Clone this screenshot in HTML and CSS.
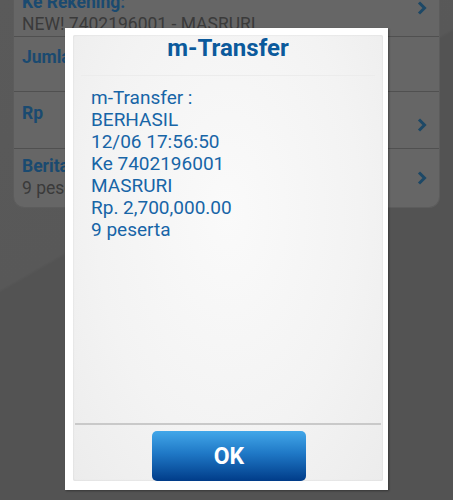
FILE: index.html
```html
<!DOCTYPE html>
<html>
<head>
<meta charset="utf-8">
<link rel="stylesheet" href="styles.css">
</head>
<body>
<div class="screen">
  <div class="list">
    <div class="row row1">
      <div class="row-text">
        <div class="row-title">Ke Rekening:</div>
        <div class="row-sub">NEW! 7402196001 - MASRURI</div>
      </div>
      <svg class="chev" width="10" height="14" viewBox="0 0 10 14"><path d="M2 1.5 L7.5 7 L2 12.5" fill="none" stroke="#1d4866" stroke-width="3"/></svg>
    </div>
    <div class="row row2">
      <div class="row-text">
        <div class="row-title">Jumlah</div>
      </div>
    </div>
    <div class="row row3">
      <div class="row-text">
        <div class="row-title">Rp</div>
      </div>
      <svg class="chev" width="10" height="14" viewBox="0 0 10 14"><path d="M2 1.5 L7.5 7 L2 12.5" fill="none" stroke="#1d4866" stroke-width="3"/></svg>
    </div>
    <div class="row row4">
      <div class="row-text">
        <div class="row-title">Berita</div>
        <div class="row-sub">9 peserta</div>
      </div>
      <svg class="chev" width="10" height="14" viewBox="0 0 10 14"><path d="M2 1.5 L7.5 7 L2 12.5" fill="none" stroke="#1d4866" stroke-width="3"/></svg>
    </div>
  </div>

  <div class="dialog">
    <div class="dialog-inner">
      <div class="dialog-title">m-Transfer</div>
      <div class="dialog-body">
        <div>m-Transfer :</div>
        <div>BERHASIL</div>
        <div>12/06 17:56:50</div>
        <div>Ke 7402196001</div>
        <div>MASRURI</div>
        <div>Rp. 2,700,000.00</div>
        <div>9 peserta</div>
      </div>
      <div class="dialog-footer">
        <button class="ok">OK</button>
      </div>
    </div>
  </div>
</div>
</body>
</html>
```

FILE: styles.css
```css
html, body {
  margin: 0;
  padding: 0;
}
body {
  width: 453px;
  height: 500px;
  overflow: hidden;
  background: linear-gradient(150deg, #5a5a5a 0%, #585858 38%, #535353 38.5%, #535353 100%);
  font-family: Roboto, "Noto Sans", sans-serif;
}
.screen {
  position: relative;
  display: flow-root;
  width: 453px;
  height: 500px;
}
.list {
  margin: -20px 13px 0 13px;
  background: #666666;
  border: 1px solid #5c5c5c;
  border-top: none;
  border-radius: 0 0 11px 11px;
  display: flex;
  flex-direction: column;
}
.row {
  display: flex;
  align-items: center;
  padding: 0 12px 0 8px;
  border-bottom: 1px solid #505050;
  box-sizing: border-box;
}
.row:last-child {
  border-bottom: none;
}
.row1 { height: 57px; }
.row2 { height: 55px; align-items: flex-start; padding-top: 9px; }
.row3 { height: 57px; align-items: flex-start; padding-top: 10px; }
.row4 { height: 58px; }
.row-text {
  flex: 1;
  display: flex;
  flex-direction: column;
}
.row1 .row-text { margin-top: 10px; }
.row4 .row-text { margin-top: -2px; }
.row-title {
  font-weight: bold;
  font-size: 17.5px;
  line-height: 22px;
  color: #1a4a70;
}
.row-sub {
  font-size: 17.5px;
  line-height: 22px;
  color: #3a3a3a;
}
.row3 .chev { margin-top: 16px; }
.chev { flex: none; }

.dialog {
  position: absolute;
  left: 65px;
  top: 28px;
  width: 323px;
  height: 462px;
  box-sizing: border-box;
  background: #ffffff;
  padding: 7px 5px 9px 8px;
  box-shadow: 1px 1px 2px rgba(0,0,0,0.35);
}
.dialog-inner {
  height: 100%;
  display: flex;
  flex-direction: column;
  background: radial-gradient(ellipse at 50% 40%, #fafafa 0%, #f3f3f3 60%, #ececec 100%);
  border-radius: 2px;
  box-shadow: inset 0 0 2px rgba(0,0,0,0.12);
}
.dialog-title {
  text-align: center;
  font-weight: bold;
  font-size: 24px;
  line-height: 26px;
  color: #0b5a9c;
  padding: 0 0 14px;
  margin: 0 8px;
  border-bottom: 1px solid #ececec;
}
.dialog-body {
  flex: 1;
  padding: 11px 0 0 18px;
  font-size: 19px;
  line-height: 22px;
  color: #1765a7;
}
.dialog-footer {
  border-top: 2px solid #c9c9c9;
  margin: 0 2px;
  padding-top: 6px;
  display: flex;
  justify-content: center;
}
.ok {
  width: 154px;
  height: 50px;
  border: none;
  border-radius: 5px;
  background: linear-gradient(to bottom, #42a7e9 0%, #1f78c6 45%, #003c89 100%);
  color: #ffffff;
  font-family: Roboto, "Noto Sans", sans-serif;
  font-weight: bold;
  font-size: 23px;
  padding: 0;
  margin-left: 2px;
}
```
